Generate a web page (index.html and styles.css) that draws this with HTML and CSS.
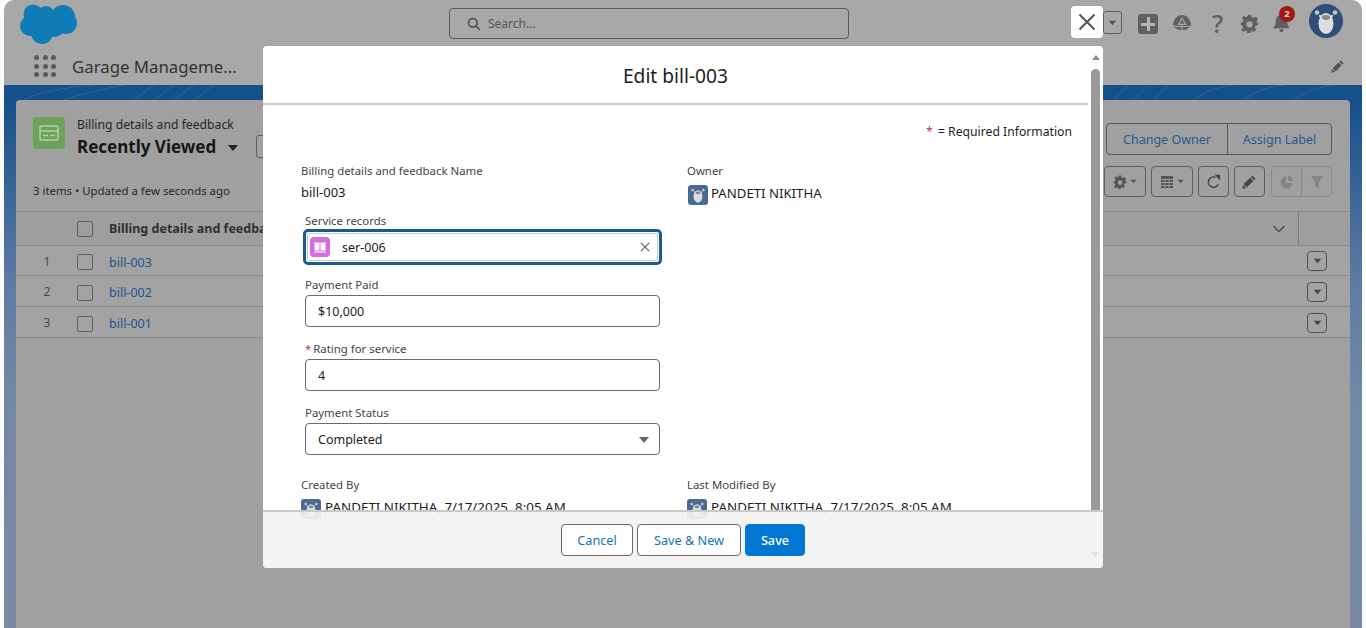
FILE: index.html
```html
<!DOCTYPE html>
<html lang="en">

<head>
  <meta charset="UTF-8" />
  <meta name="viewport" content="width=device-width, initial-scale=1.0" />
  <title>Edit bill-003</title>
  <link rel="stylesheet" href="styles.css">
</head>

<body>
  <svg class="defs" width="0" height="0">
    <symbol id="bear" viewBox="0 0 34 34">
      <circle cx="8" cy="8.500" r="2.300" fill="#c4c8ce" />
      <circle cx="26" cy="8.500" r="2.300" fill="#c4c8ce" />
      <circle cx="11" cy="12" r="1.200" fill="#c4c8ce" />
      <circle cx="23" cy="12" r="1.200" fill="#c4c8ce" />
      <ellipse cx="17" cy="19.500" rx="7.500" ry="10.500" fill="#dedede" />
      <ellipse cx="17" cy="13.500" rx="4" ry="2.400" fill="#7d8796" />
    </symbol>
    <symbol id="gear" viewBox="0 0 24 24">
      <path d="M10 1h4l.7 3.200 2.300 1 2.800-1.800 2.800 2.800-1.800 2.800 1 2.300L23 11v3l-3.400.7-1 2.300 1.800 2.800-2.800 2.800-2.800-1.800-1.100.5-.7 3.200h-4l-.7-3.200-1.100-.5-2.800 1.800-2.800-2.800L4 17l-1-2.300L1 14v-3l2.200-.9 1-2.300-1.800-2.800 2.800-2.800L7 4l2.300-1z" />
      <circle cx="12" cy="13" r="4" fill="var(--hole, #a8a8a8)" />
    </symbol>
    <symbol id="pencil" viewBox="0 0 16 16">
      <path d="M11 1.500l3.500 3.500-1.600 1.600-3.500-3.500zM8.600 3.900l3.500 3.500-6.800 6.800-3.500-3.500zM1.200 11.400l3.400 3.400-4.200.9z" />
    </symbol>
    <symbol id="caret" viewBox="0 0 12 8">
      <path d="M1 1h10l-5 6z" />
    </symbol>
  </svg>

  <div class="app">
    <header class="topbar">
      <svg class="logo" viewBox="0 0 58 41">
        <g fill="#0f7cb8">
          <circle cx="13" cy="11" r="9.500" />
          <circle cx="26" cy="11" r="8" />
          <circle cx="43" cy="14" r="12" />
          <circle cx="10" cy="23" r="10" />
          <circle cx="22" cy="30" r="11" />
          <circle cx="35" cy="25" r="9" />
          <circle cx="46" cy="20" r="11" />
          <rect x="14" y="8" width="26" height="16" />
        </g>
      </svg>
      <div class="search">
        <svg class="search-icon" viewBox="0 0 14 14">
          <circle cx="5.800" cy="5.800" r="4.300" />
          <path d="M9 9l4 4" />
        </svg>
        <span>Search...</span>
      </div>
      <div class="top-actions">
        <span class="fav-menu"><svg class="caret-sm"><use href="#caret" /></svg></span>
        <span class="add-btn"></span>
        <svg class="trail" viewBox="0 0 22 20">
          <path d="M1 12C2 5 6 1 11 1s9 4 10 11c-1 3-5 6-10 6S2 15 1 12z" />
          <path class="trail-cut" d="M11 4.500L7 11.500h8zM1.500 13c5 1.500 14 1.500 19 0M11 11.500V18" />
        </svg>
        <span class="help">?</span>
        <svg class="gear-top"><use href="#gear" /></svg>
        <span class="bell">
          <svg viewBox="0 0 20 20">
            <path d="M10 1c4 0 6 3 6 7 0 3 1 5 3 7H1c2-2 3-4 3-7 0-4 2-7 6-7zM8 16h4c0 2-.5 3-2 3s-2-1-2-3z" />
          </svg>
          <b class="badge">2</b>
        </span>
        <svg class="avatar" viewBox="0 0 34 34">
          <circle cx="17" cy="17" r="17" fill="#2f4f78" />
          <use href="#bear" />
        </svg>
      </div>
    </header>

    <nav class="navbar">
      <div class="waffle">
        <i></i><i></i><i></i><i></i><i></i><i></i><i></i><i></i><i></i>
      </div>
      <span class="app-name">Garage Manageme...</span>
      <svg class="nav-pencil"><use href="#pencil" /></svg>
    </nav>

    <main class="band">
      <svg class="band-lines" viewBox="0 0 1358 15" preserveAspectRatio="none">
        <path d="M20 15C40 5 60 3 90 0M60 15C80 8 100 4 120 0M130 15l20-15M150 15l20-15M170 15l20-15M190 15l20-15M260 15C270 8 290 3 320 0M340 15C350 8 360 3 380 0M1110 15l14-15M1130 15l14-15M1150 15l14-15M1190 15c10-8 20-12 40-15M1240 15c10-8 20-12 40-15M1290 15c10-8 20-12 40-15" />
      </svg>
      <section class="card">
        <div class="list-head">
          <div class="list-title">
            <span class="obj-icon">
              <svg viewBox="0 0 20 16">
                <rect x="1" y="1" width="18" height="14" rx="1.500" />
                <path d="M1 6h18M4 10.500h5M11 10.500h5" />
              </svg>
            </span>
            <div class="title-text">
              <div class="obj-name">Billing details and feedback</div>
              <div class="view-name">Recently Viewed <svg class="view-caret"><use href="#caret" /></svg></div>
            </div>
            <span class="pin-btn"></span>
          </div>
          <div class="btn-group">
            <span class="group-btn owner">Change Owner</span>
            <span class="group-btn label">Assign Label</span>
          </div>
        </div>

        <div class="list-tools">
          <span class="list-meta">3 items • Updated a few seconds ago</span>
          <div class="tools">
            <span class="tool wide"><svg class="tool-gear"><use href="#gear" /></svg><svg class="caret-xs"><use href="#caret" /></svg></span>
            <span class="tool wide">
              <svg class="tool-grid" viewBox="0 0 14 14">
                <path d="M1 1h12v3H1zM1 5h3.500v2H1zM5.300 5h3.400v2H5.300zM9.500 5H13v2H9.500zM1 8h3.500v2H1zM5.300 8h3.400v2H5.300zM9.500 8H13v2H9.500zM1 11h3.500v2H1zM5.300 11h3.400v2H5.300zM9.500 11H13v2H9.500z" />
              </svg>
              <svg class="caret-xs"><use href="#caret" /></svg>
            </span>
            <span class="tool">
              <svg class="tool-refresh" viewBox="0 0 16 16">
                <path d="M13 11A5.500 5.500 0 1 1 10 3.500" />
                <path class="solid" d="M9 .5l6 .5v6z" />
              </svg>
            </span>
            <span class="tool"><svg class="tool-pencil"><use href="#pencil" /></svg></span>
            <span class="tool-pair">
              <span class="tool-off">
                <svg viewBox="0 0 14 14">
                  <path d="M6 1.500A6 6 0 1 0 12.500 8H6z" />
                  <path d="M8 .8A6 6 0 0 1 13.200 6H8z" />
                </svg>
              </span>
              <span class="tool-off">
                <svg viewBox="0 0 16 16">
                  <path d="M1 1h14L10 8v7l-4-2V8z" />
                </svg>
              </span>
            </span>
          </div>
        </div>

        <div class="table">
          <div class="row row-head">
            <span></span>
            <span><span class="check"></span></span>
            <span class="col-name">Billing details and feedback Name</span>
            <span class="col-sort">
              <svg viewBox="0 0 14 8"><path d="M1.500 1l5.500 5.500L12.500 1" /></svg>
            </span>
            <span class="col-end"></span>
          </div>
          <div class="row row-first">
            <span class="num">1</span>
            <span><span class="check"></span></span>
            <a class="rec-link">bill-003</a>
            <span></span>
            <span class="col-act"><span class="row-menu"><svg><use href="#caret" /></svg></span></span>
          </div>
          <div class="row">
            <span class="num">2</span>
            <span><span class="check"></span></span>
            <a class="rec-link">bill-002</a>
            <span></span>
            <span class="col-act"><span class="row-menu"><svg><use href="#caret" /></svg></span></span>
          </div>
          <div class="row">
            <span class="num">3</span>
            <span><span class="check"></span></span>
            <a class="rec-link">bill-001</a>
            <span></span>
            <span class="col-act"><span class="row-menu"><svg><use href="#caret" /></svg></span></span>
          </div>
        </div>
      </section>
    </main>
  </div>

  <!-- modal on top of the dimmed list -->
  <button class="close-btn" type="button">
    <svg viewBox="0 0 18 18"><path d="M1.500 1.500l15 15M16.500 1.500l-15 15" /></svg>
  </button>

  <div class="modal">
    <div class="modal-main">
      <h2 class="modal-title">Edit bill-003</h2>
      <div class="modal-body">
        <p class="required-note"><span class="star">*</span> = Required Information</p>
        <div class="form-grid">
          <div class="col-left">
            <div class="read-label">Billing details and feedback Name</div>
            <div class="read-value">bill-003</div>

            <label class="field-label first">Service records</label>
            <div class="lookup-ring">
              <div class="lookup">
                <span class="lookup-icon">
                  <svg viewBox="0 0 14 14">
                    <path d="M1.500 2.500h5v8h-5zM7.500 2.500h5v8h-5zM1 11.500h12v1H1z" />
                  </svg>
                </span>
                <span class="lookup-text">ser-006</span>
                <svg class="lookup-clear" viewBox="0 0 12 12"><path d="M1 1l10 10M11 1L1 11" /></svg>
              </div>
            </div>

            <label class="field-label">Payment Paid</label>
            <div class="input">$10,000</div>

            <label class="field-label"><span class="star">*</span>Rating for service</label>
            <div class="input">4</div>

            <label class="field-label">Payment Status</label>
            <div class="input select">Completed <svg class="select-caret"><use href="#caret" /></svg></div>

            <div class="read-label audit">Created By</div>
            <div class="person clipped">
              <svg class="person-icon" viewBox="0 0 34 34"><rect width="34" height="34" rx="5" fill="#4a6a94" /><use href="#bear" /></svg>
              <span>PANDETI NIKITHA, 7/17/2025, 8:05 AM</span>
            </div>
          </div>
          <div class="col-right">
            <div class="read-label">Owner</div>
            <div class="person owner-row">
              <svg class="person-icon" viewBox="0 0 34 34"><rect width="34" height="34" rx="5" fill="#4a6a94" /><use href="#bear" /></svg>
              <span>PANDETI NIKITHA</span>
            </div>
            <div class="read-label audit-right">Last Modified By</div>
            <div class="person clipped">
              <svg class="person-icon" viewBox="0 0 34 34"><rect width="34" height="34" rx="5" fill="#4a6a94" /><use href="#bear" /></svg>
              <span>PANDETI NIKITHA, 7/17/2025, 8:05 AM</span>
            </div>
          </div>
        </div>
      </div>
    </div>
    <div class="scrollbar">
      <span class="arrow-up"></span>
      <span class="thumb"></span>
    </div>
    <footer class="modal-foot">
      <button class="btn" type="button">Cancel</button>
      <button class="btn" type="button">Save &amp; New</button>
      <button class="btn btn-brand" type="button">Save</button>
      <span class="arrow-down"></span>
    </footer>
  </div>
</body>

</html>
```

FILE: styles.css
```css
* {
  box-sizing: border-box;
}

html, body {
  height: 100%;
}

body {
  margin: 0;
  background: #fbfbfb;
  font-family: "Noto Sans", "Open Sans", sans-serif;
  font-size: 13px;
  color: #1d1d1d;
  overflow: hidden;
}

.defs {
  position: absolute;
}

.app {
  margin: 0 4px;
  height: 628px;
  background: #a8a8a8;
  border-radius: 10px 10px 0 0;
  overflow: hidden;
}

/* top bar */
.topbar {
  height: 50px;
  display: flex;
  align-items: flex-start;
  padding-left: 16px;
}

.logo {
  width: 58px;
  height: 41px;
  margin-top: 3px;
}

.search {
  width: 400px;
  height: 31px;
  margin: 8px 0 0 371px;
  border: 1px solid #5a5a5a;
  border-radius: 4px;
  display: flex;
  align-items: center;
  padding-left: 17px;
  gap: 7px;
  color: #555;
  font-size: 12px;
}

.search-icon {
  width: 14px;
  height: 14px;
  fill: none;
  stroke: #4c4c4c;
  stroke-width: 1.600;
}

.top-actions {
  position: relative;
  flex: 1;
  height: 50px;
}

.top-actions > * {
  position: absolute;
}

.fav-menu {
  left: 254px;
  top: 11px;
  width: 19px;
  height: 23px;
  border: 1px solid #606060;
  border-radius: 3px;
  display: flex;
  align-items: center;
  justify-content: center;
}

.caret-sm {
  width: 9px;
  height: 6px;
  fill: #555;
}

.add-btn {
  left: 289px;
  top: 14px;
  width: 20px;
  height: 20px;
  background: #5f5f5f;
  border-radius: 3px;
}

.add-btn::before, .add-btn::after {
  content: "";
  position: absolute;
  background: #b5b5b5;
}

.add-btn::before {
  left: 3px;
  top: 8.500px;
  width: 14px;
  height: 3px;
}

.add-btn::after {
  left: 8.500px;
  top: 3px;
  width: 3px;
  height: 14px;
}

.trail {
  left: 323px;
  top: 14px;
  width: 20px;
  height: 18px;
  fill: #5f5f5f;
}

.trail-cut {
  fill: none;
  stroke: #a8a8a8;
  stroke-width: 1.300;
}

.help {
  left: 363px;
  top: 7px;
  font-size: 25px;
  line-height: 32px;
  color: #5f5f5f;
  font-weight: 500;
}

.gear-top {
  left: 391px;
  top: 14px;
  width: 19px;
  height: 19px;
  fill: #5f5f5f;
}

.bell {
  left: 423px;
  top: 14px;
  width: 20px;
  height: 20px;
}

.bell svg {
  width: 19px;
  height: 19px;
  fill: #5f5f5f;
}

.badge {
  position: absolute;
  left: 7px;
  top: -8px;
  width: 16px;
  height: 16px;
  border-radius: 50%;
  background: #a31712;
  color: #e8d5d5;
  font-size: 9.500px;
  line-height: 16px;
  text-align: center;
}

.avatar {
  left: 460px;
  top: 4px;
  width: 34px;
  height: 34px;
}

/* app nav */
.navbar {
  height: 35px;
  display: flex;
  align-items: center;
  padding: 0 17px 3px 30px;
}

.waffle {
  display: grid;
  grid-template-columns: repeat(3, 5px);
  gap: 3.500px;
  width: 22px;
}

.waffle i {
  width: 5px;
  height: 5px;
  border-radius: 50%;
  background: #5c5c5c;
}

.app-name {
  margin-left: 16px;
  font-size: 16.800px;
  color: #333;
}

.nav-pencil {
  margin-left: auto;
  width: 14px;
  height: 14px;
  fill: #555;
}

/* blue band behind the list */
.band {
  position: relative;
  height: 543px;
  padding: 15px 12px 0;
  background: linear-gradient(180deg, #15508a 0, #15508a 15px, #5f7ba3 200px, #7489a5 320px, #7a8aa3 543px);
}

.band-lines {
  position: absolute;
  left: 0;
  top: 0;
  width: 100%;
  height: 15px;
  fill: none;
  stroke: rgba(255, 255, 255, 0.12);
  stroke-width: 1;
}

.card {
  position: relative;
  height: 528px;
  background: #a0a0a0;
  border-radius: 4px 4px 0 0;
}

.list-head {
  height: 66px;
  display: flex;
  justify-content: space-between;
  align-items: flex-start;
  padding: 17px 18px 0 17px;
}

.list-title {
  display: flex;
  gap: 12px;
}

.obj-icon {
  width: 32px;
  height: 32px;
  background: #6ca35a;
  border-radius: 4px;
  display: flex;
  align-items: center;
  justify-content: center;
}

.obj-icon svg {
  width: 20px;
  height: 16px;
  fill: none;
  stroke: #b8cfae;
  stroke-width: 1.500;
}

.title-text {
  width: 170px;
}

.obj-name {
  font-size: 12.200px;
  line-height: 15px;
  color: #262626;
}

.view-name {
  margin-top: 2px;
  font-size: 17px;
  font-weight: 700;
  line-height: 25px;
  color: #161616;
  white-space: nowrap;
}

.view-caret {
  width: 12px;
  height: 8px;
  fill: #222;
  margin: 0 0 1px 6px;
}

.pin-btn {
  width: 30px;
  height: 23px;
  margin: 18px 0 0 -3px;
  border: 1px solid #5d5d5d;
  border-radius: 3px;
}

.btn-group {
  display: flex;
  height: 32px;
  margin-top: 6px;
  border: 1px solid #555;
  border-radius: 4px;
}

.group-btn {
  display: flex;
  align-items: center;
  justify-content: center;
  color: #255a8f;
  font-size: 12.500px;
}

.owner {
  width: 120px;
}

.label {
  width: 104px;
  border-left: 1px solid #555;
}

.list-tools {
  height: 45px;
  display: flex;
  justify-content: space-between;
  align-items: flex-start;
  padding: 0 18px 0 17px;
}

.list-meta {
  margin-top: 17px;
  font-size: 11.400px;
  line-height: 16px;
  color: #262626;
}

.tools {
  display: flex;
  gap: 5px;
}

.tool {
  width: 31px;
  height: 31px;
  border: 1px solid #5d5d5d;
  border-radius: 4px;
  display: flex;
  align-items: center;
  justify-content: center;
  gap: 3px;
}

.tool.wide {
  width: 42px;
}

.tool-gear {
  width: 14px;
  height: 14px;
  fill: #555;
  --hole: #a0a0a0;
}

.caret-xs {
  width: 7px;
  height: 5px;
  fill: #555;
}

.tool-grid {
  width: 14px;
  height: 14px;
  fill: #555;
}

.tool-refresh {
  width: 15px;
  height: 15px;
  fill: none;
  stroke: #444;
  stroke-width: 1.700;
}

.tool-refresh .solid {
  fill: #444;
  stroke: none;
}

.tool-pencil {
  width: 15px;
  height: 15px;
  fill: #444;
}

.tool-pair {
  display: flex;
  width: 61px;
  height: 31px;
  margin-left: 1px;
  border: 1px solid #8a8a8a;
  border-radius: 4px;
}

.tool-off {
  flex: 1;
  display: flex;
  align-items: center;
  justify-content: center;
}

.tool-off + .tool-off {
  border-left: 1px solid #8a8a8a;
}

.tool-off svg {
  width: 14px;
  height: 14px;
  fill: #848484;
}

/* list table */
.table {
  border-top: 1px solid #898989;
}

.row {
  display: grid;
  grid-template-columns: 61px 32px 1fr 42px 52px;
  align-items: center;
  height: 31px;
  padding-top: 3px;
  background: #a3a3a3;
  border-bottom: 1px solid #898989;
}

.row-first {
  height: 30px;
}

.row-head {
  height: 34px;
  padding-top: 0;
  background: #9e9e9e;
}

.check {
  display: block;
  width: 16px;
  height: 16px;
  border: 1px solid #5f5f5f;
  border-radius: 2px;
}

.col-name {
  font-weight: 700;
  font-size: 12.500px;
  color: #303030;
  white-space: nowrap;
}

.col-sort svg {
  display: block;
  width: 14px;
  height: 8px;
  margin-left: 16px;
  fill: none;
  stroke: #4c4c4c;
  stroke-width: 1.500;
}

.col-end {
  height: 33px;
  border-left: 1px solid #7d7d7d;
}

.num {
  margin-top: -2px;
  padding-left: 1px;
  text-align: center;
  color: #4a4a4a;
  font-size: 12px;
}

.rec-link {
  color: #24528a;
  font-size: 12.500px;
}

.col-act {
  margin-top: -2px;
}

.row-menu {
  display: flex;
  align-items: center;
  justify-content: center;
  width: 20px;
  height: 20px;
  margin-left: 9px;
  border: 1px solid #505050;
  border-radius: 4px;
}

.row-menu svg {
  width: 9px;
  height: 6px;
  fill: #444;
}

/* modal */
.close-btn {
  position: absolute;
  left: 1071px;
  top: 6px;
  width: 32px;
  height: 32px;
  padding: 0;
  border: none;
  border-radius: 4px;
  background: #fff;
  display: flex;
  align-items: center;
  justify-content: center;
}

.close-btn svg {
  width: 18px;
  height: 18px;
  fill: none;
  stroke: #555;
  stroke-width: 2;
}

.modal {
  position: absolute;
  left: 263px;
  top: 46px;
  width: 840px;
  height: 522px;
  background: #fff;
  border-radius: 4px;
  overflow: hidden;
}

.modal-main {
  width: 825px;
  height: 464px;
}

.modal-title {
  height: 59px;
  margin: 0;
  border-bottom: 2px solid #c9c9c9;
  text-align: center;
  font-size: 19.200px;
  font-weight: 400;
  line-height: 60px;
  color: #1d1d1d;
}

.modal-body {
  padding: 19px 16px 0 38px;
}

.required-note {
  margin: 0 0 23px;
  text-align: right;
  font-size: 12.200px;
  line-height: 16px;
}

.star {
  color: #c23934;
  margin-right: 2px;
}

.required-note .star {
  margin-right: 2px;
}

.form-grid {
  display: grid;
  grid-template-columns: 386px 1fr;
}

.read-label {
  font-size: 11.400px;
  line-height: 16px;
  color: #444;
}

.read-value {
  margin-top: 5px;
  line-height: 16px;
}

.field-label {
  display: block;
  margin: 14px 0 2px 4px;
  font-size: 11.400px;
  line-height: 16px;
  color: #444;
}

.field-label.first {
  margin: 13px 0 0 4px;
}

.lookup-ring {
  width: 359px;
  height: 36px;
  margin: 0 0 -2px 2px;
  padding: 1px;
  border: 3px solid #1b5a8f;
  border-radius: 5px;
}

.lookup {
  height: 100%;
  border: 1px solid #c9c9c9;
  border-radius: 2px;
  display: flex;
  align-items: center;
  padding: 0 7px 0 2px;
}

.lookup-icon {
  width: 20px;
  height: 20px;
  border-radius: 4px;
  background: #d66ee0;
  display: flex;
  align-items: center;
  justify-content: center;
}

.lookup-icon svg {
  width: 14px;
  height: 14px;
  fill: #fff;
}

.lookup-text {
  margin-left: 12px;
  font-size: 12.500px;
}

.lookup-clear {
  margin-left: auto;
  width: 10px;
  height: 10px;
  fill: none;
  stroke: #666;
  stroke-width: 1.500;
}

.input {
  position: relative;
  width: 355px;
  height: 32px;
  margin-left: 4px;
  padding-left: 12px;
  border: 1px solid #6b6b6b;
  border-radius: 4px;
  font-size: 12.500px;
  line-height: 31px;
}

.select-caret {
  position: absolute;
  right: 9px;
  top: 12px;
  width: 12px;
  height: 8px;
  fill: #666;
}

.audit {
  margin-top: 22px;
}

.person {
  display: flex;
  gap: 4px;
  line-height: 16px;
  white-space: nowrap;
  font-size: 13.400px;
}

.person-icon {
  flex: none;
  width: 20px;
  height: 20px;
}

.clipped {
  margin-top: 6px;
}

.owner-row {
  margin-top: 6px;
  gap: 3px;
  font-size: 13.200px;
}

.owner-row .person-icon {
  margin-left: 1px;
}

.audit-right {
  margin-top: 272px;
}

.scrollbar {
  position: absolute;
  right: 3px;
  top: 0;
  width: 9px;
  height: 465px;
}

.arrow-up {
  position: absolute;
  left: 0.500px;
  top: 9px;
  border-left: 4px solid transparent;
  border-right: 4px solid transparent;
  border-bottom: 5px solid #8c8c8c;
}

.thumb {
  position: absolute;
  left: 0;
  top: 23px;
  width: 9px;
  height: 442px;
  border-radius: 5px 5px 0 0;
  background: #9a9a9a;
}

.modal-foot {
  position: relative;
  height: 58px;
  border-top: 2px solid #c9c9c9;
  background: rgba(243, 243, 243, 0.92);
  display: flex;
  justify-content: center;
  gap: 4px;
  padding-top: 12px;
}

.btn {
  height: 32px;
  width: 72px;
  padding: 0;
  border: 1px solid #6b6b6b;
  border-radius: 4px;
  background: #fff;
  color: #0f76b5;
  font-family: inherit;
  font-size: 12.700px;
}

.btn + .btn {
  width: 104px;
}

.btn + .btn + .btn {
  width: 60px;
  border-color: #0176d3;
  background: #0176d3;
  color: #fff;
  font-weight: 500;
}

.arrow-down {
  position: absolute;
  right: 4px;
  bottom: 11px;
  border-left: 4px solid transparent;
  border-right: 4px solid transparent;
  border-top: 5px solid #e2e2e2;
}
```
